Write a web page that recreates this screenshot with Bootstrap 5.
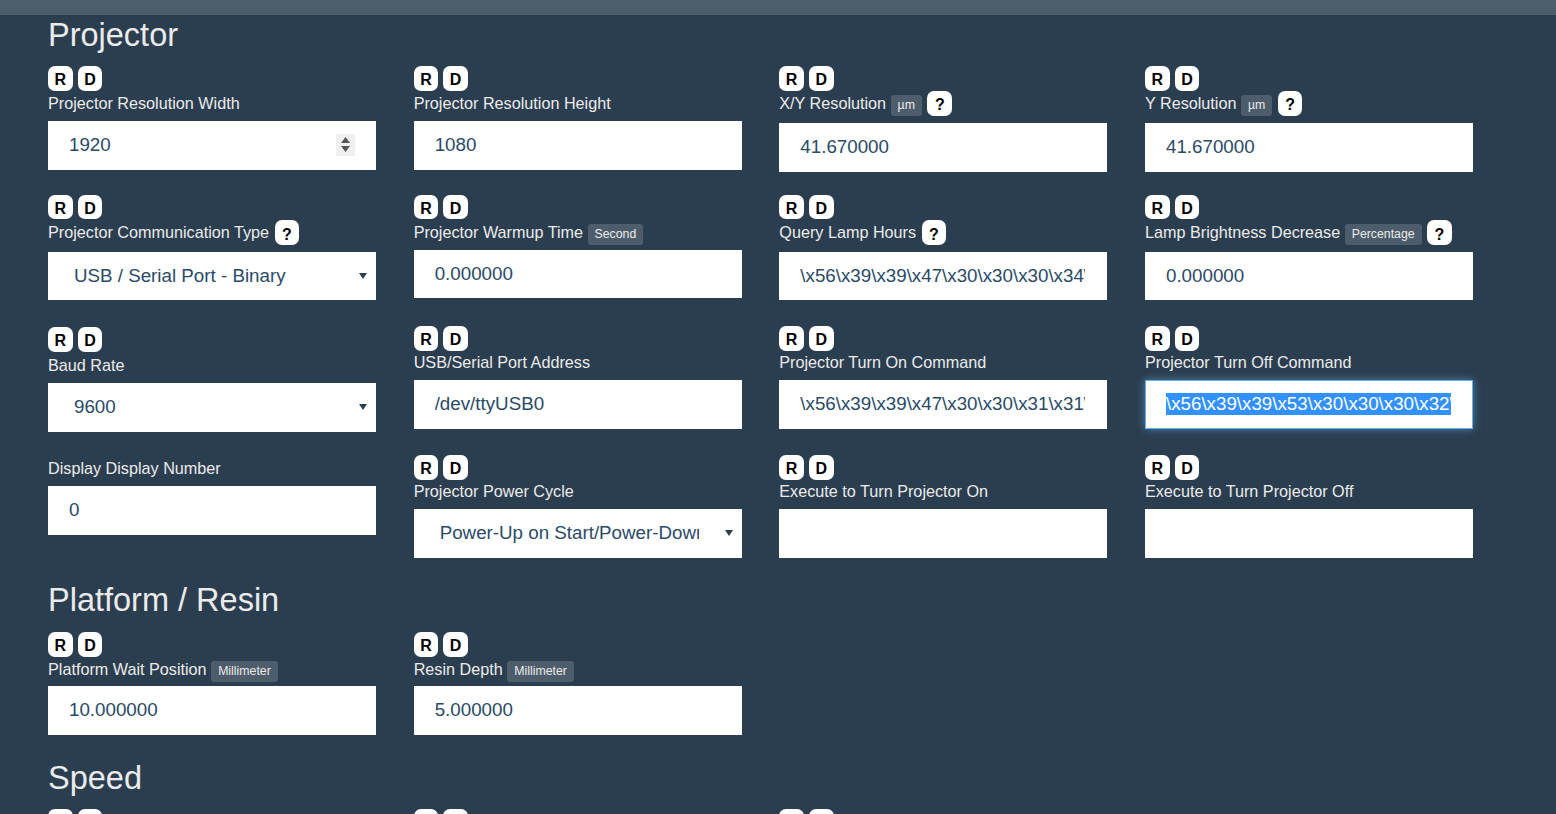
<!DOCTYPE html>
<html lang="en"><head><meta charset="utf-8"><title>Settings</title>
<link href="https://cdn.jsdelivr.net/npm/bootstrap@5.3.0/dist/css/bootstrap.min.css" rel="stylesheet">
<style>
html,body{height:814px;overflow:hidden}
body{background:#2b3e50;color:#ebebeb;font-family:"Liberation Sans",Arial,sans-serif;font-size:16.2px}
.topstrip{height:15px;background:#4e5d6c}
.page-wrap{padding:0 0 0 48px}
.sect-title{font-size:32.5px;line-height:40px;font-weight:400;margin:0;color:#ebebeb;height:51px}
.title-b{margin-top:21px;height:52px}
.title-c{margin-top:15px}
.field-row{display:flex;column-gap:37.67px;width:1425px}
.field{width:328px;flex:none}
.row-1{height:128.5px}.row-2{height:131.5px}.row-3{height:129px}.row-4{height:104px}.row-5{height:111px}
.row-6{height:5px;overflow:hidden}
.chips{display:flex;gap:5px;height:24.6px}
.chip{width:24.67px;height:24.6px;padding:4px 0 0;border:0;border-radius:7px;background:#fff;color:#000;font-weight:700;font-size:16px;line-height:20px;text-align:center}
.chip-inline{display:inline-block;margin:-2px 0 0 1px;vertical-align:middle}
.fld-label{display:block;line-height:24px;height:24px;margin:0 0 6.4px;color:#ebebeb;white-space:nowrap}
.lbl-tall{height:26px}
.lbl-r2{margin-top:.9px;margin-bottom:5.6px}
.lbl-gap8{margin-bottom:7.6px}
.lbl-r3{margin-top:-.6px;margin-bottom:6px}
.lbl-r3a{margin-top:1.4px;margin-bottom:6px}
.lbl-r4a{margin-top:1px;margin-bottom:6px}
.lbl-r5{margin-top:.4px;margin-bottom:5px}
.nudge{padding-top:1px}
.unit{display:inline-block;background:#4e5d6c;color:#ebebeb;font-size:12.3px;font-weight:400;line-height:14px;padding:3px 7px 4px;border-radius:3px;margin-left:0;vertical-align:0}
.form-control.cfg-input,.form-select.cfg-input{height:48.7px;border:1px solid #fff;border-radius:0;background-color:#fff;color:#2a4a68;font-size:18.75px;padding:0 21px 0 20px;font-family:inherit;box-shadow:none}
.form-select.cfg-input{padding:0 42px 0 25px;background-size:8px 6px;background-position:right 8px center;background-image:url("data:image/svg+xml,%3csvg xmlns='http://www.w3.org/2000/svg' viewBox='0 0 8 6'%3e%3cpath fill='%232b3e50' d='M0 0h8L4 6z'/%3e%3c/svg%3e")}
.form-control.cfg-input:focus{border-color:#66afe9;box-shadow:0 0 8px rgba(102,175,233,.6)}
.cfg-input::selection{background:#3390ff;color:#fff}
.cfg-input::-webkit-inner-spin-button{-webkit-appearance:none;display:none}
.spin-wrap{position:relative}
.spin-box{position:absolute;left:288px;top:13px;width:19px;height:22px;background:#f0f0f0;display:flex;align-items:center;justify-content:center}
</style></head>
<body>
<div class="topstrip"></div>
<div class="page-wrap">
<h3 class="sect-title">Projector</h3>
<div class="field-row row-1">
 <div class="field"><div class="chips"><button class="chip">R</button><button class="chip">D</button></div><label class="fld-label">Projector Resolution Width</label><div class="spin-wrap"><input class="form-control cfg-input" type="number" value="1920"><span class="spin-box"><svg width="9" height="15" viewBox="0 0 9 15"><path fill="#555" d="M4.500 0 9 6H0zM0 9h9l-4.500 6z"/></svg></span></div></div>
 <div class="field"><div class="chips"><button class="chip">R</button><button class="chip">D</button></div><label class="fld-label">Projector Resolution Height</label><input class="form-control cfg-input" type="text" value="1080"></div>
 <div class="field"><div class="chips"><button class="chip">R</button><button class="chip">D</button></div><label class="fld-label lbl-tall">X/Y Resolution <span class="unit">µm</span> <button class="chip chip-inline">?</button></label><input class="form-control cfg-input" type="text" value="41.670000"></div>
 <div class="field"><div class="chips"><button class="chip">R</button><button class="chip">D</button></div><label class="fld-label lbl-tall">Y Resolution <span class="unit">µm</span> <button class="chip chip-inline">?</button></label><input class="form-control cfg-input" type="text" value="41.670000"></div>
</div>
<div class="field-row row-2">
 <div class="field"><div class="chips"><button class="chip">R</button><button class="chip">D</button></div><label class="fld-label lbl-r2 lbl-gap8">Projector Communication Type <button class="chip chip-inline">?</button></label><select class="form-select cfg-input"><option>USB / Serial Port - Binary</option></select></div>
 <div class="field"><div class="chips"><button class="chip">R</button><button class="chip">D</button></div><label class="fld-label lbl-r2">Projector Warmup Time <span class="unit">Second</span></label><input class="form-control cfg-input" type="text" value="0.000000"></div>
 <div class="field"><div class="chips"><button class="chip">R</button><button class="chip">D</button></div><label class="fld-label lbl-r2 lbl-gap8">Query Lamp Hours <button class="chip chip-inline">?</button></label><input class="form-control cfg-input" type="text" value="\x56\x39\x39\x47\x30\x30\x30\x34\x30\x30\x0D"></div>
 <div class="field"><div class="chips"><button class="chip">R</button><button class="chip">D</button></div><label class="fld-label lbl-r2 lbl-gap8">Lamp Brightness Decrease <span class="unit">Percentage</span> <button class="chip chip-inline">?</button></label><input class="form-control cfg-input" type="text" value="0.000000"></div>
</div>
<div class="field-row row-3">
 <div class="field nudge"><div class="chips"><button class="chip">R</button><button class="chip">D</button></div><label class="fld-label lbl-r3a">Baud Rate</label><select class="form-select cfg-input"><option>9600</option></select></div>
 <div class="field"><div class="chips"><button class="chip">R</button><button class="chip">D</button></div><label class="fld-label lbl-r3">USB/Serial Port Address</label><input class="form-control cfg-input" type="text" value="/dev/ttyUSB0"></div>
 <div class="field"><div class="chips"><button class="chip">R</button><button class="chip">D</button></div><label class="fld-label lbl-r3">Projector Turn On Command</label><input class="form-control cfg-input" type="text" value="\x56\x39\x39\x47\x30\x30\x31\x31\x30\x30\x0D"></div>
 <div class="field"><div class="chips"><button class="chip">R</button><button class="chip">D</button></div><label class="fld-label lbl-r3">Projector Turn Off Command</label><input id="selected-cmd" class="form-control cfg-input" type="text" value="\x56\x39\x39\x53\x30\x30\x30\x32\x30\x30\x0D"></div>
</div>
<div class="field-row row-4">
 <div class="field"><label class="fld-label lbl-r4a">Display Display Number</label><input class="form-control cfg-input" type="text" value="0"></div>
 <div class="field"><div class="chips"><button class="chip">R</button><button class="chip">D</button></div><label class="fld-label lbl-r3">Projector Power Cycle</label><select class="form-select cfg-input"><option>Power-Up on Start/Power-Down on Exit</option></select></div>
 <div class="field"><div class="chips"><button class="chip">R</button><button class="chip">D</button></div><label class="fld-label lbl-r3">Execute to Turn Projector On</label><input class="form-control cfg-input" type="text" value=""></div>
 <div class="field"><div class="chips"><button class="chip">R</button><button class="chip">D</button></div><label class="fld-label lbl-r3">Execute to Turn Projector Off</label><input class="form-control cfg-input" type="text" value=""></div>
</div>
<h3 class="sect-title title-b">Platform / Resin</h3>
<div class="field-row row-5">
 <div class="field"><div class="chips"><button class="chip">R</button><button class="chip">D</button></div><label class="fld-label lbl-r5">Platform Wait Position <span class="unit">Millimeter</span></label><input class="form-control cfg-input" type="text" value="10.000000"></div>
 <div class="field"><div class="chips"><button class="chip">R</button><button class="chip">D</button></div><label class="fld-label lbl-r5">Resin Depth <span class="unit">Millimeter</span></label><input class="form-control cfg-input" type="text" value="5.000000"></div>
</div>
<h3 class="sect-title title-c">Speed</h3>
<div class="field-row row-6">
 <div class="field"><div class="chips"><button class="chip">R</button><button class="chip">D</button></div></div>
 <div class="field"><div class="chips"><button class="chip">R</button><button class="chip">D</button></div></div>
 <div class="field"><div class="chips"><button class="chip">R</button><button class="chip">D</button></div></div>
</div>
</div>
<script src="https://cdn.jsdelivr.net/npm/bootstrap@5.3.0/dist/js/bootstrap.bundle.min.js"></script>
<script>var s=document.getElementById('selected-cmd');s.focus();s.select();</script>
</body></html>
